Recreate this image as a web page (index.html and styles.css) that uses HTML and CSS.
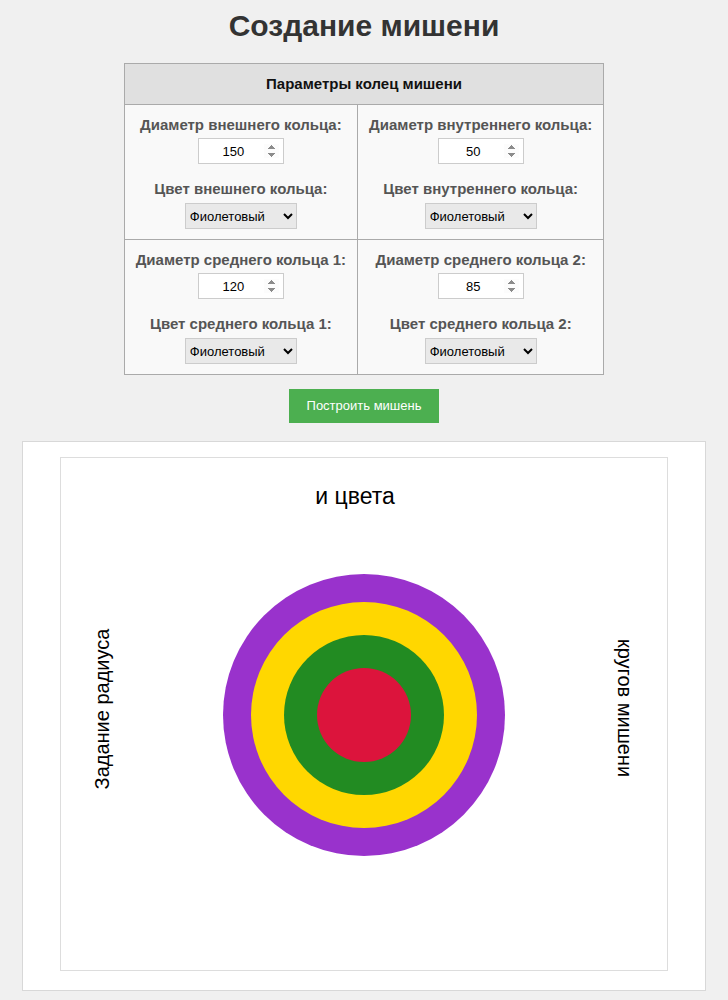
FILE: index.html
```html
<!DOCTYPE html>
<html lang="ru">
<head>
<meta charset="utf-8">
<title>Создание мишени</title>
<link rel="stylesheet" href="styles.css">
</head>
<body>
<h1 class="title">Создание мишени</h1>
<table class="params">
  <thead>
    <tr><th colspan="2">Параметры колец мишени</th></tr>
  </thead>
  <tbody>
    <tr>
      <td>
        <label class="field-label">Диаметр внешнего кольца:</label>
        <input class="num" type="number" value="150">
        <label class="field-label second">Цвет внешнего кольца:</label>
        <select class="color"><option>Фиолетовый</option></select>
      </td>
      <td>
        <label class="field-label">Диаметр внутреннего кольца:</label>
        <input class="num" type="number" value="50">
        <label class="field-label second">Цвет внутреннего кольца:</label>
        <select class="color"><option>Фиолетовый</option></select>
      </td>
    </tr>
    <tr>
      <td>
        <label class="field-label">Диаметр среднего кольца 1:</label>
        <input class="num" type="number" value="120">
        <label class="field-label second">Цвет среднего кольца 1:</label>
        <select class="color"><option>Фиолетовый</option></select>
      </td>
      <td>
        <label class="field-label">Диаметр среднего кольца 2:</label>
        <input class="num" type="number" value="85">
        <label class="field-label second">Цвет среднего кольца 2:</label>
        <select class="color"><option>Фиолетовый</option></select>
      </td>
    </tr>
  </tbody>
</table>
<div class="actions"><button class="build">Построить мишень</button></div>
<div class="board">
  <svg class="canvas" width="606" height="512" viewBox="0 0 606 512">
    <text class="cap top" x="294" y="46" text-anchor="middle">и цвета</text>
    <text class="cap" transform="translate(48 251) rotate(-90)" text-anchor="middle">Задание радиуса</text>
    <text class="cap" transform="translate(557 250) rotate(90)" text-anchor="middle">кругов мишени</text>
    <circle cx="303" cy="257" r="141" fill="#9932CC"/>
    <circle cx="303" cy="257" r="113" fill="#FFD700"/>
    <circle cx="303" cy="257" r="80" fill="#228B22"/>
    <circle cx="303" cy="257" r="47" fill="#DC143C"/>
  </svg>
</div>
</body>
</html>
```
FILE: styles.css
```css
html, body {
  margin: 0;
  padding: 0;
}
body {
  background: #f0f0f0;
  font-family: "Liberation Sans", Arial, sans-serif;
  color: #333;
  padding-top: 9px;
}
.title {
  margin: 0 0 20px;
  text-align: center;
  font-size: 30px;
  line-height: 34px;
  font-weight: bold;
  color: #333;
}
.params {
  margin: 0 auto;
  border-collapse: collapse;
  border: 1px solid #aaa;
}
.params th {
  background: #e0e0e0;
  color: #111;
  font-size: 15px;
  line-height: 20px;
  padding: 10px;
  border: 1px solid #aaa;
}
.params td {
  background: #f9f9f9;
  border: 1px solid #aaa;
  padding: 10px 11px;
  text-align: center;
  vertical-align: top;
}
.field-label {
  display: block;
  font-weight: bold;
  font-size: 15px;
  line-height: 20px;
  color: #555;
  margin-bottom: 3px;
}
.field-label.second {
  margin-top: 15px;
  margin-bottom: 4px;
}
.num {
  box-sizing: border-box;
  width: 86px;
  height: 26px;
  border: 1px solid #ccc;
  background: #fff;
  text-align: center;
  font-family: "Liberation Sans", Arial, sans-serif;
  font-size: 13px;
  color: #000;
  padding: 2px 4px;
  margin: 0;
}
.num::-webkit-inner-spin-button,
.num::-webkit-outer-spin-button {
  opacity: 1;
}
.color {
  box-sizing: border-box;
  width: 112px;
  height: 26px;
  border: 1px solid #ccc;
  background: #e9e9e9;
  font-family: "Liberation Sans", Arial, sans-serif;
  font-size: 13px;
  color: #000;
  margin: 0;
  border-radius: 0;
}
.actions {
  text-align: center;
  margin: 14px 0 18px;
}
.build {
  background: #4caf50;
  color: #fff;
  border: none;
  padding: 10px 18px;
  font-family: "Liberation Sans", Arial, sans-serif;
  font-size: 13px;
  line-height: 14px;
  cursor: pointer;
}
.board {
  box-sizing: border-box;
  width: 684px;
  margin: 0 auto;
  background: #fff;
  border: 1px solid #d8d8d8;
  padding: 15px 15px 19px;
}
.canvas {
  display: block;
  margin: 0 auto;
  border: 1px solid #ddd;
  background: #fff;
}
.cap {
  font-family: "Liberation Sans", Arial, sans-serif;
  font-size: 20px;
  fill: #000;
}
.cap.top {
  font-size: 23px;
}
```
